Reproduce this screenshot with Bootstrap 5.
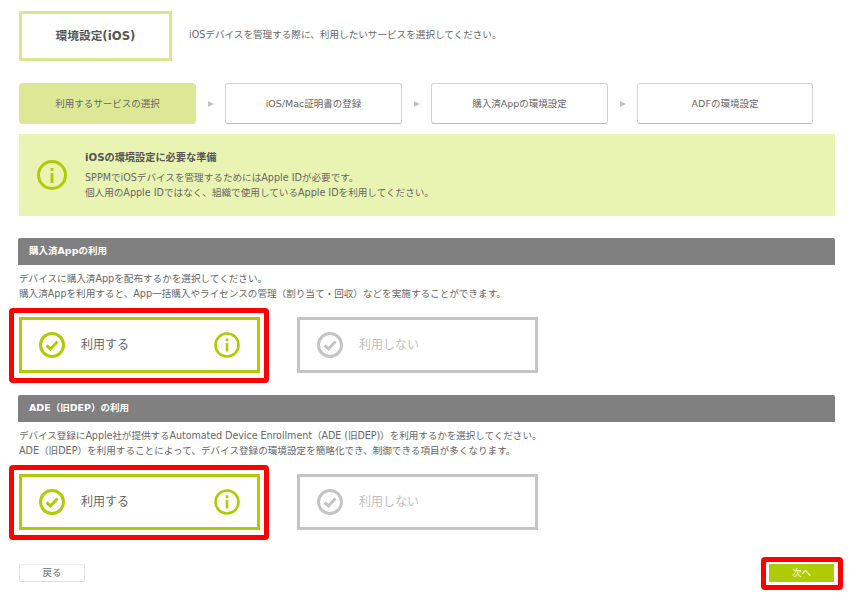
<!DOCTYPE html>
<html lang="ja">
<head>
<meta charset="utf-8">
<title>環境設定(iOS)</title>
<link href="https://cdn.jsdelivr.net/npm/bootstrap@5.3.0/dist/css/bootstrap.min.css" rel="stylesheet">
<style>
body{font-family:"DejaVu Sans","Noto Sans CJK JP",sans-serif;font-size:9.6px;color:#666;background:#fff;line-height:15px;overflow:hidden}
.pg{width:866px;height:605px;padding:11px 31px 0 19px}
.ttl{width:153px;height:50px;border:3px solid #d9e68f;font-size:11.7px;font-weight:700;color:#555}
.lead-t{margin-left:17px;margin-top:-3px}
.steps{margin-top:22px;height:41px}
.stp{width:177px;height:41px;border:1px solid #d4d4d4;border-bottom-color:#bbb;border-radius:3px;background:#fff;color:#666;font-size:9.5px}
.stp.on{background:#dde896;border-color:#dde896}
.stp.end{width:176px}
.arw{width:29px;font-size:0}
.arw svg{display:block}
.nt{margin-top:10px;height:82px;background:#e9f4b2;padding:0 0 0 18px}
.nt h6{font-size:10.2px;font-weight:700;color:#555;margin:0 0 5px;line-height:15px}
.nt-b{margin-left:18px}
.bar{margin-top:22px;margin-left:-1px;height:27px;background:#808080;color:#fff;font-weight:700;font-size:9.5px;padding:0 0 2px 11px;border-radius:2px 2px 0 0}
.dsc{margin-top:6px;height:37px}
.tgt{letter-spacing:-.07px}
.chs{margin-top:9px;gap:37px;height:56px}
.ch{width:241px;height:56px;border:3px solid #c4c4c4;background:#fff;color:#c0c0c0;font-size:12px;padding:0 17px 0 17px}
.ch.sel{border-color:#afcb05;color:#666}
.ch span.lbl{margin-left:16px}
.rd{position:absolute;border:5px solid #f00;border-radius:4px;pointer-events:none}
.rd-a{left:-13px;top:-12px;width:260px;height:75px}
.rd-b{left:-8px;top:-7px;width:82px;height:33px}
.acts{margin-top:34px;height:18px}
.bk{width:66px;height:18px;border:1px solid #e2e2e2;border-top-color:#eee;border-bottom-color:#ddd;background:#fff;color:#666;border-radius:0;padding:0;font-size:9.5px;line-height:16px}
.nx{width:65px;height:18px;background:#afcb05;border:0;color:#fff;border-radius:0;padding:0;font-size:9.5px;line-height:18px}
.nx-w{margin-right:1px}
</style>
</head>
<body>
<div class="pg">
  <div class="d-flex align-items-center">
    <div class="ttl d-flex align-items-center justify-content-center">環境設定(iOS)</div>
    <div class="lead-t">iOSデバイスを管理する際に、利用したいサービスを選択してください。</div>
  </div>

  <div class="steps d-flex align-items-center">
    <div class="stp on d-flex align-items-center justify-content-center">利用するサービスの選択</div>
    <div class="arw d-flex justify-content-center"><svg width="8" height="8" viewBox="0 0 8 8"><path d="M1 1 L7 4 L1 7Z" fill="#c4c4c4"/></svg></div>
    <div class="stp d-flex align-items-center justify-content-center">iOS/Mac証明書の登録</div>
    <div class="arw d-flex justify-content-center"><svg width="8" height="8" viewBox="0 0 8 8"><path d="M1 1 L7 4 L1 7Z" fill="#c4c4c4"/></svg></div>
    <div class="stp d-flex align-items-center justify-content-center">購入済Appの環境設定</div>
    <div class="arw d-flex justify-content-center"><svg width="8" height="8" viewBox="0 0 8 8"><path d="M1 1 L7 4 L1 7Z" fill="#c4c4c4"/></svg></div>
    <div class="stp end d-flex align-items-center justify-content-center">ADFの環境設定</div>
  </div>

  <div class="nt d-flex align-items-center">
    <svg width="30" height="30" viewBox="0 0 30 30"><circle cx="15" cy="15" r="13.5" fill="none" stroke="#afcb05" stroke-width="3"/><rect x="13.6" y="13" width="2.8" height="10" fill="#afcb05"/><rect x="13.6" y="8" width="2.8" height="3" fill="#afcb05"/></svg>
    <div class="nt-b">
      <h6>iOSの環境設定に必要な準備</h6>
      <div>SPPMでiOSデバイスを管理するためにはApple IDが必要です。<br>個人用のApple IDではなく、組織で使用しているApple IDを利用してください。</div>
    </div>
  </div>

  <div class="bar d-flex align-items-center">購入済Appの利用</div>
  <div class="dsc">デバイスに購入済Appを配布するかを選択してください。<br>購入済Appを利用すると、App一括購入やライセンスの管理（割り当て・回収）などを実施することができます。</div>
  <div class="chs d-flex">
    <div class="ch sel d-flex align-items-center position-relative">
      <svg width="26" height="26" viewBox="0 0 26 26"><circle cx="13" cy="13" r="11.5" fill="none" stroke="#afcb05" stroke-width="3"/><path d="M7.5 13.5 L11.5 17 L18.5 9.5" fill="none" stroke="#afcb05" stroke-width="3"/></svg>
      <span class="lbl flex-grow-1">利用する</span>
      <svg width="26" height="26" viewBox="0 0 26 26"><circle cx="13" cy="13" r="11.5" fill="none" stroke="#afcb05" stroke-width="2.6"/><rect x="11.7" y="11" width="2.6" height="8.5" fill="#afcb05"/><rect x="11.7" y="6.5" width="2.6" height="2.8" fill="#afcb05"/></svg>
      <span class="rd rd-a"></span>
    </div>
    <div class="ch d-flex align-items-center">
      <svg width="26" height="26" viewBox="0 0 26 26"><circle cx="13" cy="13" r="11.5" fill="none" stroke="#c4c4c4" stroke-width="3"/><path d="M7.5 13.5 L11.5 17 L18.5 9.5" fill="none" stroke="#c4c4c4" stroke-width="3"/></svg>
      <span class="lbl">利用しない</span>
    </div>
  </div>

  <div class="bar d-flex align-items-center">ADE（旧DEP）の利用</div>
  <div class="dsc"><span class="tgt">デバイス登録にApple社が提供するAutomated Device Enrollment（ADE (旧DEP)）を利用するかを選択してください。</span><br>ADE（旧DEP）を利用することによって、デバイス登録の環境設定を簡略化でき、制御できる項目が多くなります。</div>
  <div class="chs d-flex">
    <div class="ch sel d-flex align-items-center position-relative">
      <svg width="26" height="26" viewBox="0 0 26 26"><circle cx="13" cy="13" r="11.5" fill="none" stroke="#afcb05" stroke-width="3"/><path d="M7.5 13.5 L11.5 17 L18.5 9.5" fill="none" stroke="#afcb05" stroke-width="3"/></svg>
      <span class="lbl flex-grow-1">利用する</span>
      <svg width="26" height="26" viewBox="0 0 26 26"><circle cx="13" cy="13" r="11.5" fill="none" stroke="#afcb05" stroke-width="2.6"/><rect x="11.7" y="11" width="2.6" height="8.5" fill="#afcb05"/><rect x="11.7" y="6.5" width="2.6" height="2.8" fill="#afcb05"/></svg>
      <span class="rd rd-a"></span>
    </div>
    <div class="ch d-flex align-items-center">
      <svg width="26" height="26" viewBox="0 0 26 26"><circle cx="13" cy="13" r="11.5" fill="none" stroke="#c4c4c4" stroke-width="3"/><path d="M7.5 13.5 L11.5 17 L18.5 9.5" fill="none" stroke="#c4c4c4" stroke-width="3"/></svg>
      <span class="lbl">利用しない</span>
    </div>
  </div>

  <div class="acts d-flex justify-content-between">
    <button type="button" class="btn bk">戻る</button>
    <div class="position-relative nx-w">
      <button type="button" class="btn nx d-block">次へ</button>
      <span class="rd rd-b"></span>
    </div>
  </div>
</div>
<script src="https://cdn.jsdelivr.net/npm/bootstrap@5.3.0/dist/js/bootstrap.bundle.min.js"></script>
</body>
</html>
